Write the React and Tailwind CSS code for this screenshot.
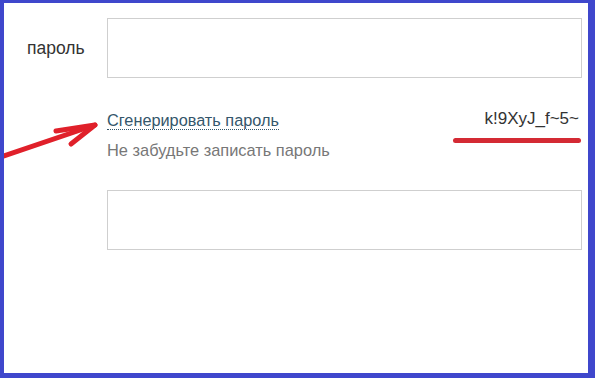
import React from 'react';

function App() {
  return (
    <div className="relative w-[595px] h-[378px] bg-white border-[#3f47cc] border-l-4 border-t-[3px] border-r-[7px] border-b-[5px] font-['Liberation_Sans',Arial,sans-serif] overflow-hidden">
      <div className="pt-[15px]">
        {/* password row */}
        <div className="grid grid-cols-[103px_475px] items-center">
          <label className="pl-[23px] text-[17.5px] text-[#333]">пароль</label>
          <div className="h-[60px] border border-[#cfcfcf] bg-white"></div>
        </div>

        {/* generator row */}
        <div className="grid grid-cols-[103px_475px] mt-[31px]">
          <div></div>
          <div>
            <div className="flex justify-between items-start leading-[20px]">
              <span className="text-[16.3px] text-[#34566b] border-b border-dotted border-[#34566b] leading-[18px] mt-[2px]">
                Сгенерировать пароль
              </span>
              <span className="text-[17px] text-[#333] pr-[3px]">k!9XyJ_f~5~</span>
            </div>
            <p className="mt-[10px] text-[16.4px] leading-[20px] text-[#777]">Не забудьте записать пароль</p>
          </div>
        </div>

        {/* second field */}
        <div className="grid grid-cols-[103px_475px] mt-[30px]">
          <div></div>
          <div className="h-[60px] border border-[#cfcfcf] bg-white"></div>
        </div>
      </div>

      {/* annotations */}
      <div className="absolute left-[449px] top-[135px] w-[128px] h-[5px] rounded-full bg-[#d42a34]"></div>
      <svg className="absolute left-0 top-[102px]" width="110" height="60" viewBox="0 0 110 60">
        <g stroke="#e0202a" strokeWidth="5" strokeLinecap="round" strokeLinejoin="round" fill="none">
          <path d="M0 51 L91 20" />
          <path d="M52 26 L91 20 L67 39" />
        </g>
      </svg>
    </div>
  );
}

export default App;
